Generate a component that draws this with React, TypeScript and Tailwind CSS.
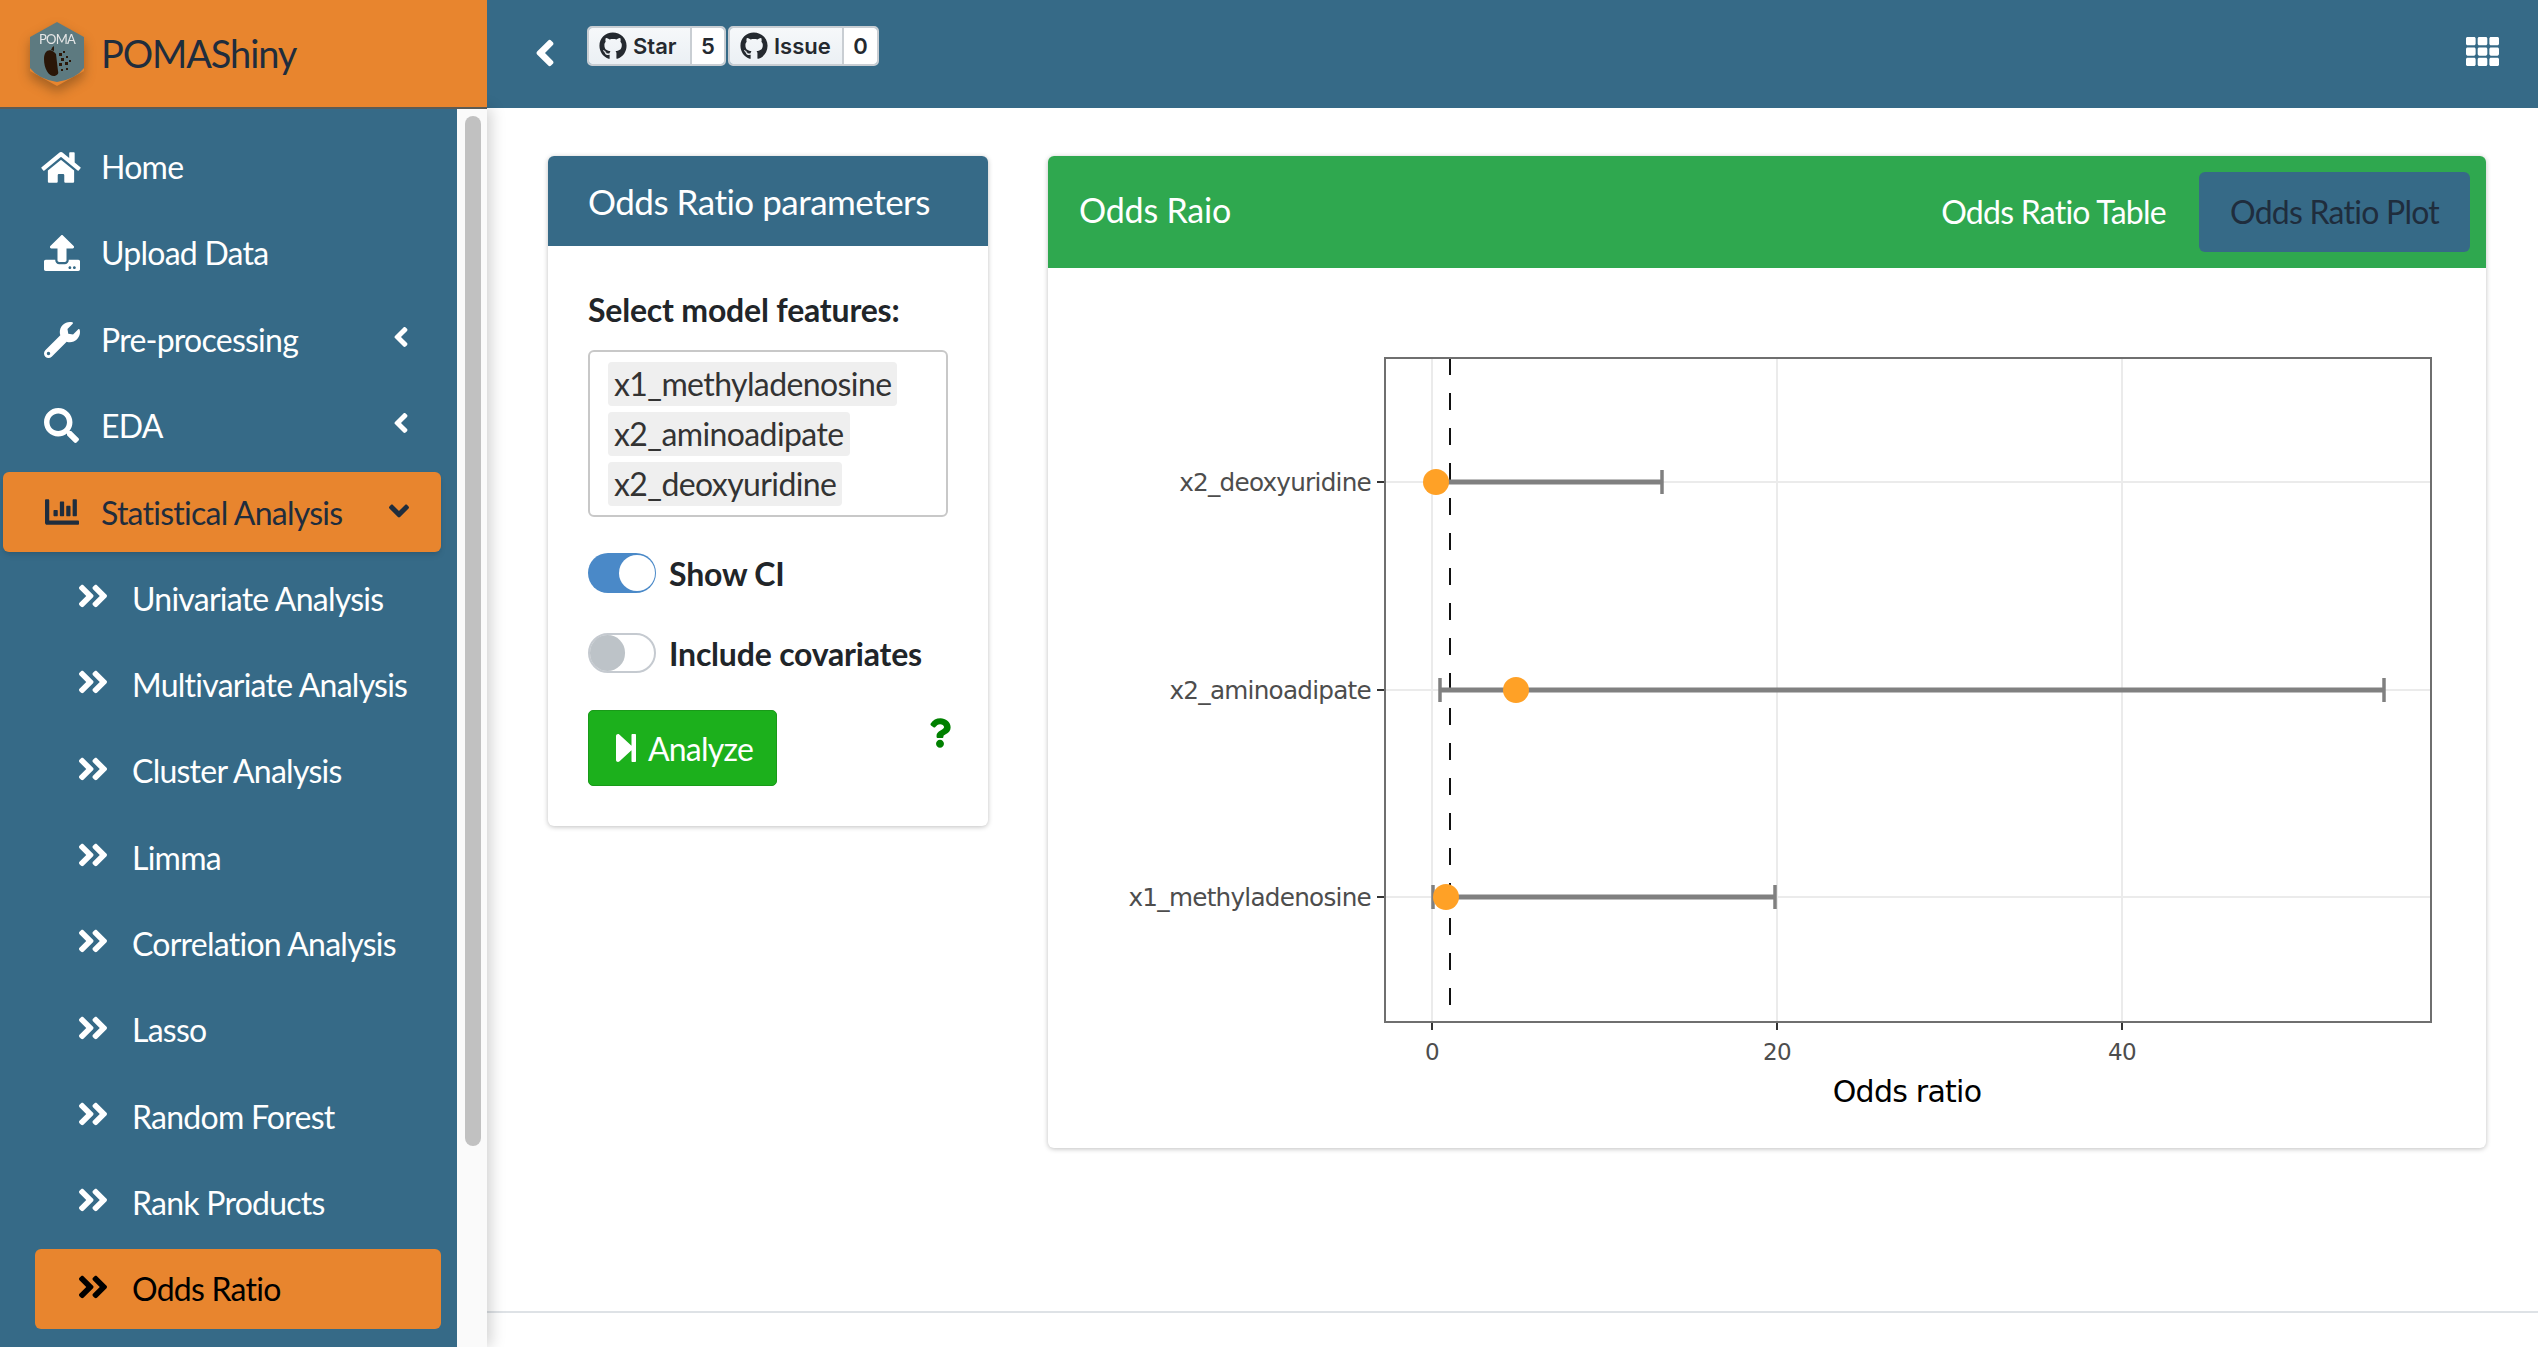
import React from "react";
import {
  FaAngleDoubleRight,
  FaAngleDown,
  FaAngleLeft,
  FaChartBar,
  FaGithub,
  FaHome,
  FaQuestion,
  FaSearch,
  FaStepForward,
  FaTh,
  FaUpload,
  FaWrench,
} from "react-icons/fa";

const subItems = [
  "Univariate Analysis",
  "Multivariate Analysis",
  "Cluster Analysis",
  "Limma",
  "Correlation Analysis",
  "Lasso",
  "Random Forest",
  "Rank Products",
];

const topItems = [
  { label: "Home", icon: <FaHome className="w-[40px] h-[35px]" /> },
  { label: "Upload Data", icon: <FaUpload className="ml-[3px] w-[36px] h-[36px]" /> },
  { label: "Pre-processing", icon: <FaWrench className="ml-[3px] w-[36px] h-[36px]" />, caret: true },
  { label: "EDA", icon: <FaSearch className="ml-[3px] w-[35px] h-[35px]" />, caret: true },
];

function Logo() {
  return (
    <svg width="58" height="66" viewBox="0 0 58 66" className="drop-shadow-[0_6px_6px_rgba(80,50,20,0.45)]">
      <path d="M29 1 L56 16 L56 50 L29 65 L2 50 L2 16 Z" fill="#e8852e" />
      <path d="M29 1 L56 16 L56 47 Q48 58 29 61 Q10 58 2 47 L2 16 Z" fill="#5d7a80" />
      <text x="29" y="23" textAnchor="middle" fontSize="13" fill="#e6e6e6" fontFamily="Lato, sans-serif">
        POMA
      </text>
      <path d="M26 31 C21 27 16 30 16 38 C16 48 21 56 27 55 C29 54 31 53 30 50 L28 33 Z" fill="#2a1608" />
      <path d="M23 29 Q24 26 26 25 L26 30 Z" fill="#2a1608" />
      <g fill="#2a1608">
        <rect x="31" y="32" width="3" height="3" />
        <rect x="35" y="30" width="2" height="2" />
        <rect x="33" y="37" width="3" height="3" />
        <rect x="38" y="35" width="2" height="2" />
        <rect x="31" y="42" width="3" height="3" />
        <rect x="37" y="41" width="3" height="3" />
        <rect x="41" y="39" width="2" height="2" />
        <rect x="33" y="48" width="2" height="2" />
        <rect x="38" y="47" width="2" height="2" />
      </g>
    </svg>
  );
}

function Badge({ label, count, labelWidth, countWidth }: { label: string; count: number; labelWidth: string; countWidth: string }) {
  return (
    <div className="flex h-[40px] rounded-[5px] border-2 border-[#c9ced3] overflow-hidden font-['Inter',sans-serif] font-semibold text-[22px] tracking-normal text-[#24292f]">
      <div className={`flex items-center gap-[6px] pl-[10px] bg-gradient-to-b from-[#f6f8fa] to-[#ebf0f4] border-r-2 border-[#c9ced3] ${labelWidth}`}>
        <FaGithub className="w-[28px] h-[28px] shrink-0" />
        <span>{label}</span>
      </div>
      <div className={`flex items-center justify-center bg-white ${countWidth}`}>{count}</div>
    </div>
  );
}

function Toggle({ on, label }: { on: boolean; label: string }) {
  return (
    <div className="h-[40px] flex items-center gap-[13px]">
      {on ? (
        <div className="w-[68px] h-[40px] rounded-full bg-[#4a89c8] flex items-center justify-end pr-[1px]">
          <div className="w-[36px] h-[36px] rounded-full bg-white" />
        </div>
      ) : (
        <div className="w-[68px] h-[40px] rounded-full border-2 border-[#c5cad0] bg-white">
          <div className="w-[35px] h-full rounded-full bg-[#bdc3c8]" />
        </div>
      )}
      <span className="text-[32px] leading-[40px] mt-[2px] font-bold tracking-[-0.2px] text-[#212529]">{label}</span>
    </div>
  );
}

function OddsChart() {
  const rows = [
    { label: "x2_deoxyuridine", y: 482, lo: null, hi: 1662, dot: 1436 },
    { label: "x2_aminoadipate", y: 690, lo: 1440, hi: 2384, dot: 1516 },
    { label: "x1_methyladenosine", y: 897, lo: 1433, hi: 1775, dot: 1446 },
  ];
  const ticks = [
    { x: 1432, label: "0" },
    { x: 1777, label: "20" },
    { x: 2122, label: "40" },
  ];
  return (
    <svg viewBox="1048 268 1438 880" className="block w-[1438px] h-[880px]" fontFamily="'DejaVu Sans', sans-serif">
      {ticks.map((t) => (
        <line key={t.x} x1={t.x} x2={t.x} y1={358} y2={1022} stroke="#ebebeb" strokeWidth="2" />
      ))}
      {rows.map((r) => (
        <line key={r.y} x1={1385} x2={2431} y1={r.y} y2={r.y} stroke="#ebebeb" strokeWidth="2" />
      ))}
      <line x1={1450} x2={1450} y1={358} y2={1022} stroke="#111" strokeWidth="2" strokeDasharray="17 18" />
      {rows.map((r) => (
        <g key={r.label}>
          <text x={1371} y={r.y + 9} textAnchor="end" fontSize="24.7" fill="#4d4d4d">
            {r.label}
          </text>
          <line x1={1377} x2={1384} y1={r.y} y2={r.y} stroke="#333" strokeWidth="2" />
          <line x1={r.lo ?? r.dot} x2={r.hi} y1={r.y} y2={r.y} stroke="#808080" strokeWidth="5" />
          <line x1={r.hi} x2={r.hi} y1={r.y - 12} y2={r.y + 12} stroke="#808080" strokeWidth="3.5" />
          {r.lo && <line x1={r.lo} x2={r.lo} y1={r.y - 12} y2={r.y + 12} stroke="#808080" strokeWidth="3.5" />}
          <circle cx={r.dot} cy={r.y} r={13} fill="#ffa126" />
        </g>
      ))}
      <rect x={1385} y={358} width={1046} height={664} fill="none" stroke="#6f6f6f" strokeWidth="2" />
      {ticks.map((t) => (
        <g key={t.label}>
          <line x1={t.x} x2={t.x} y1={1023} y2={1030} stroke="#333" strokeWidth="2" />
          <text x={t.x} y={1060} textAnchor="middle" fontSize="23" fill="#4d4d4d">
            {t.label}
          </text>
        </g>
      ))}
      <text x={1907} y={1102} textAnchor="middle" fontSize="30" fill="#000">
        Odds ratio
      </text>
    </svg>
  );
}

export default function App() {
  return (
    <div className="h-screen overflow-hidden flex flex-col bg-white font-['Lato',sans-serif] text-[32px] tracking-[-0.75px]">
      <header className="flex h-[108px] shrink-0 bg-[#366a87]">
        <div className="w-[487px] h-[109px] flex items-center gap-[15px] pl-[28px] bg-[#e8852e] border-b-2 border-[#5b5b55] z-20">
          <Logo />
          <span className="text-[38px] tracking-[-1.1px] text-[#1f2d3d]">POMAShiny</span>
        </div>
        <div className="flex-1 flex items-center pl-[46px] pr-[39px]">
          <FaAngleLeft className="text-white w-[24px] h-[42px] mr-[30px] -mt-[3px]" />
          <div className="flex gap-[2px] -mt-[16px]">
            <Badge label="Star" count={5} labelWidth="w-[103px]" countWidth="w-[32px]" />
            <Badge label="Issue" count={0} labelWidth="w-[114px]" countWidth="w-[33px]" />
          </div>
          <FaTh className="text-white w-[33px] h-[33px] ml-auto -mt-[6px]" />
        </div>
      </header>

      <div className="flex flex-1 min-h-0">
        <aside className="w-[487px] shrink-0 flex shadow-[4px_0_14px_rgba(0,0,0,0.18)] z-10">
          <nav className="w-[457px] bg-[#366a87] pt-[19px] text-white flex flex-col gap-[6.33px]">
            {topItems.map((item) => (
              <div key={item.label} className="h-[80px] flex items-center mr-[16px] pl-[41px] pr-[30px]">
                <span className="w-[60px] shrink-0">{item.icon}</span>
                <span>{item.label}</span>
                {item.caret && <FaAngleLeft className="ml-auto w-[20px] h-[32px] -mt-[5px]" />}
              </div>
            ))}
            <div className="h-[80px] flex items-center ml-[3px] mr-[16px] pl-[40px] pr-[26px] rounded-[6px] bg-[#e8852e] text-[#1f2d3d] shadow-md">
              <FaChartBar className="w-[38px] h-[34px] mr-[20px] shrink-0" />
              <span className="mt-[1px]">Statistical Analysis</span>
              <FaAngleDown className="ml-auto w-[32px] h-[32px] -mt-[3px]" />
            </div>
            {subItems.map((label) => (
              <div key={label} className="h-[80px] flex items-center pl-[75px]">
                <FaAngleDoubleRight className="w-[36px] h-[36px] mr-[21px] -mt-[5px] shrink-0" />
                <span>{label}</span>
              </div>
            ))}
            <div className="h-[80px] flex items-center ml-[35px] mr-[16px] pl-[40px] rounded-[6px] bg-[#e8852e] text-black">
              <FaAngleDoubleRight className="w-[36px] h-[36px] mr-[21px] -mt-[5px] shrink-0" />
              <span>Odds Ratio</span>
            </div>
          </nav>
          <div className="w-[30px] bg-[#fafafa] pl-[8px] pt-[8px]">
            <div className="w-[16px] h-[1030px] rounded-full bg-[#c1c1c1]" />
          </div>
        </aside>

        <div className="flex-1 flex flex-col min-w-0">
          <main className="flex-1 flex items-start gap-[60px] pt-[48px] pl-[61px] pr-[52px]">
            <section className="w-[440px] h-[670px] shrink-0 rounded-[6px] bg-white shadow-[0_1px_5px_rgba(0,0,0,0.25)] overflow-hidden">
              <div className="h-[90px] flex items-center pl-[40px] bg-[#366a87] text-white text-[35px] tracking-[-0.5px]">
                Odds Ratio parameters
              </div>
              <div className="px-[40px] pt-[42px]">
                <div className="font-bold text-[#212529] text-[32px] tracking-[-0.2px] leading-[44px]">Select model features:</div>
                <div className="mt-[18px] h-[167px] rounded-[6px] border-2 border-[#c8c8c8] pl-[18px] pt-[10px] flex flex-col items-start gap-[6px] text-[#333] tracking-[-0.6px]">
                  {["x1_methyladenosine", "x2_aminoadipate", "x2_deoxyuridine"].map((chip) => (
                    <span key={chip} className="h-[44px] flex items-center px-[6px] rounded-[4px] bg-[#efefef]">
                      {chip}
                    </span>
                  ))}
                </div>
                <div className="mt-[36px] flex flex-col gap-[40px]">
                  <Toggle on label="Show CI" />
                  <Toggle on={false} label="Include covariates" />
                </div>
                <div className="mt-[37px] flex items-start justify-between">
                  <button className="w-[189px] h-[76px] flex items-center justify-center gap-[8px] rounded-[5px] bg-[#1cb01c] border border-[#199a19] text-white">
                    <FaStepForward className="w-[28px] h-[32px]" />
                    <span className="mt-[2px]">Analyze</span>
                  </button>
                  <FaQuestion className="w-[22px] h-[34px] mt-[6px] -mr-[3px] text-[#008000]" />
                </div>
              </div>
            </section>

            <section className="flex-1 h-[992px] rounded-[6px] bg-white shadow-[0_1px_5px_rgba(0,0,0,0.25)] overflow-hidden">
              <div className="h-[112px] flex items-center pl-[31px] pr-[16px] bg-[#2fa84f]">
                <span className="text-white text-[34px] tracking-[-0.2px] -mt-[5px]">Odds Raio</span>
                <span className="ml-auto mr-[33px] text-white">Odds Ratio Table</span>
                <span className="w-[271px] h-[80px] flex items-center justify-center rounded-[6px] bg-[#366a87] text-[#1f2d3d]">
                  Odds Ratio Plot
                </span>
              </div>
              <OddsChart />
            </section>
          </main>
          <footer className="h-[36px] shrink-0 border-t-2 border-[#dee2e6]" />
        </div>
      </div>
    </div>
  );
}
